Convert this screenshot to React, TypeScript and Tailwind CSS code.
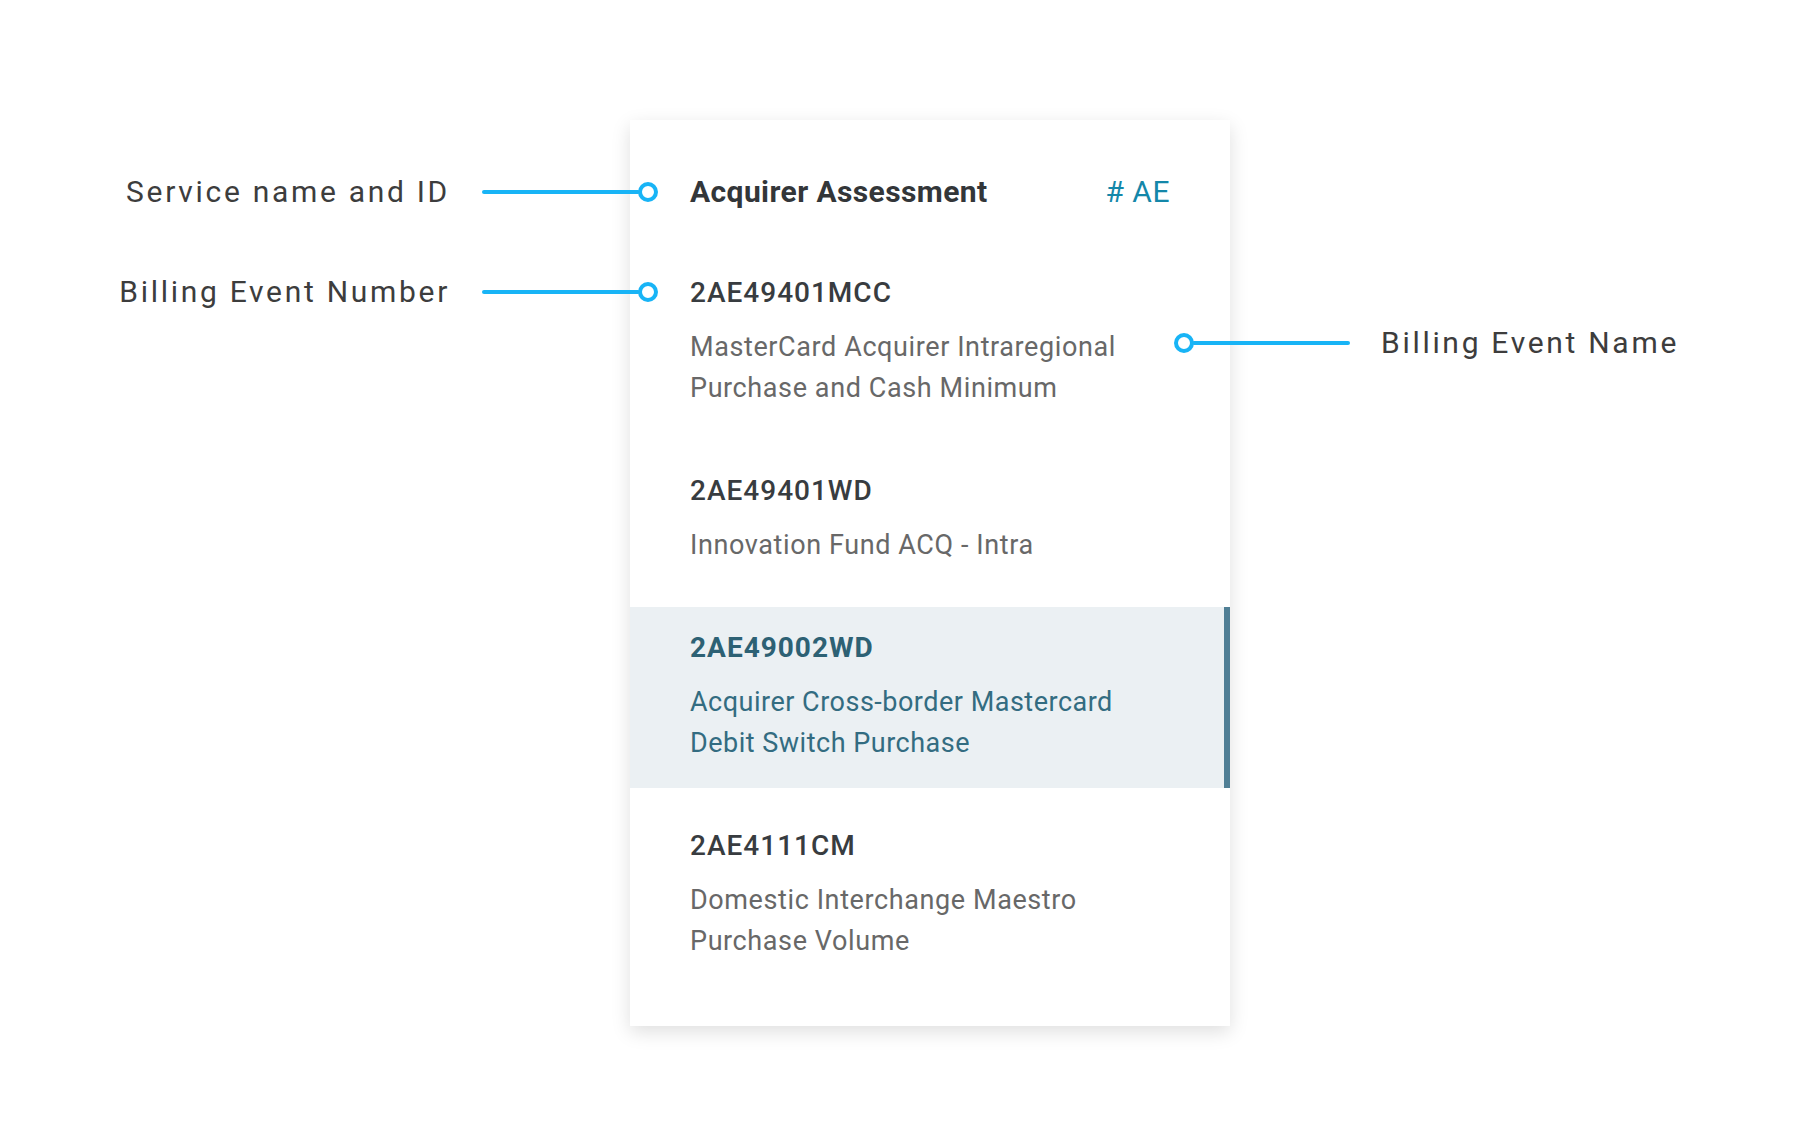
import React from "react";

type BillingEvent = {
  code: string;
  name: string;
  active?: boolean;
};

const EVENTS: BillingEvent[] = [
  { code: "2AE49401MCC", name: "MasterCard Acquirer Intraregional Purchase and Cash Minimum" },
  { code: "2AE49401WD", name: "Innovation Fund ACQ - Intra" },
  { code: "2AE49002WD", name: "Acquirer Cross-border Mastercard Debit Switch Purchase", active: true },
  { code: "2AE4111CM", name: "Domestic Interchange Maestro Purchase Volume" },
];

function Dot() {
  return (
    <span className="block h-5 w-5 shrink-0 rounded-full border-4 border-[#18b4f6] bg-white" />
  );
}

function Line() {
  return <span className="block h-1 w-[158px] shrink-0 rounded-full bg-[#18b4f6]" />;
}

function Label({ children }: { children: React.ReactNode }) {
  return (
    <span className="whitespace-nowrap text-[30px] leading-[36px] tracking-[2.7px] text-[#3d3d3d]">
      {children}
    </span>
  );
}

function EventRow({ event }: { event: BillingEvent }) {
  return (
    <li
      className={`px-[60px] pt-[24px] pb-[24px] ${
        event.active ? "border-r-[6px] border-[#507f95] bg-[#ebf0f3]" : ""
      }`}
    >
      <p
        className={`text-[28px] leading-[34px] tracking-[1px] ${
          event.active ? "font-bold text-[#2d6174]" : "font-medium text-[#383c40]"
        }`}
      >
        {event.code}
      </p>
      <p
        className={`mt-[17px] text-[27px] leading-[41px] ${
          event.active ? "tracking-[0.5px] text-[#336c81]" : "tracking-[0.6px] text-[#686868]"
        }`}
      >
        {event.name}
      </p>
    </li>
  );
}

export default function App() {
  return (
    <div
      className="min-h-screen bg-white pt-[120px] pl-[630px]"
      style={{ fontFamily: "Roboto, 'Noto Sans', sans-serif" }}
    >
      <div className="relative w-[600px]">
        <article className="bg-white pt-[54px] pb-[40px] shadow-[0_6px_18px_rgba(0,0,0,0.13)]">
          <header className="flex items-baseline justify-between px-[60px]">
            <h2 className="text-[30px] font-bold leading-[36px] tracking-[0.4px] text-[#333639]">
              Acquirer Assessment
            </h2>
            <span className="text-[30px] leading-[36px] tracking-[0.5px] text-[#1487a9]"># AE</span>
          </header>

          <ul className="mt-[42px] flex flex-col gap-[17px]">
            {EVENTS.map((event) => (
              <EventRow key={event.code} event={event} />
            ))}
          </ul>
        </article>

        {/* callouts */}
        <div className="absolute top-[72px] right-[572px] flex -translate-y-1/2 items-center">
          <Label>Service name and ID</Label>
          <span className="ml-[32px] flex items-center">
            <Line />
            <span className="-ml-[2px]">
              <Dot />
            </span>
          </span>
        </div>

        <div className="absolute top-[172px] right-[572px] flex -translate-y-1/2 items-center">
          <Label>Billing Event Number</Label>
          <span className="ml-[32px] flex items-center">
            <Line />
            <span className="-ml-[2px]">
              <Dot />
            </span>
          </span>
        </div>

        <div className="absolute top-[223px] left-[544px] flex -translate-y-1/2 items-center">
          <Dot />
          <span className="-ml-[2px]">
            <Line />
          </span>
          <span className="ml-[31px]">
            <Label>Billing Event Name</Label>
          </span>
        </div>
      </div>
    </div>
  );
}
